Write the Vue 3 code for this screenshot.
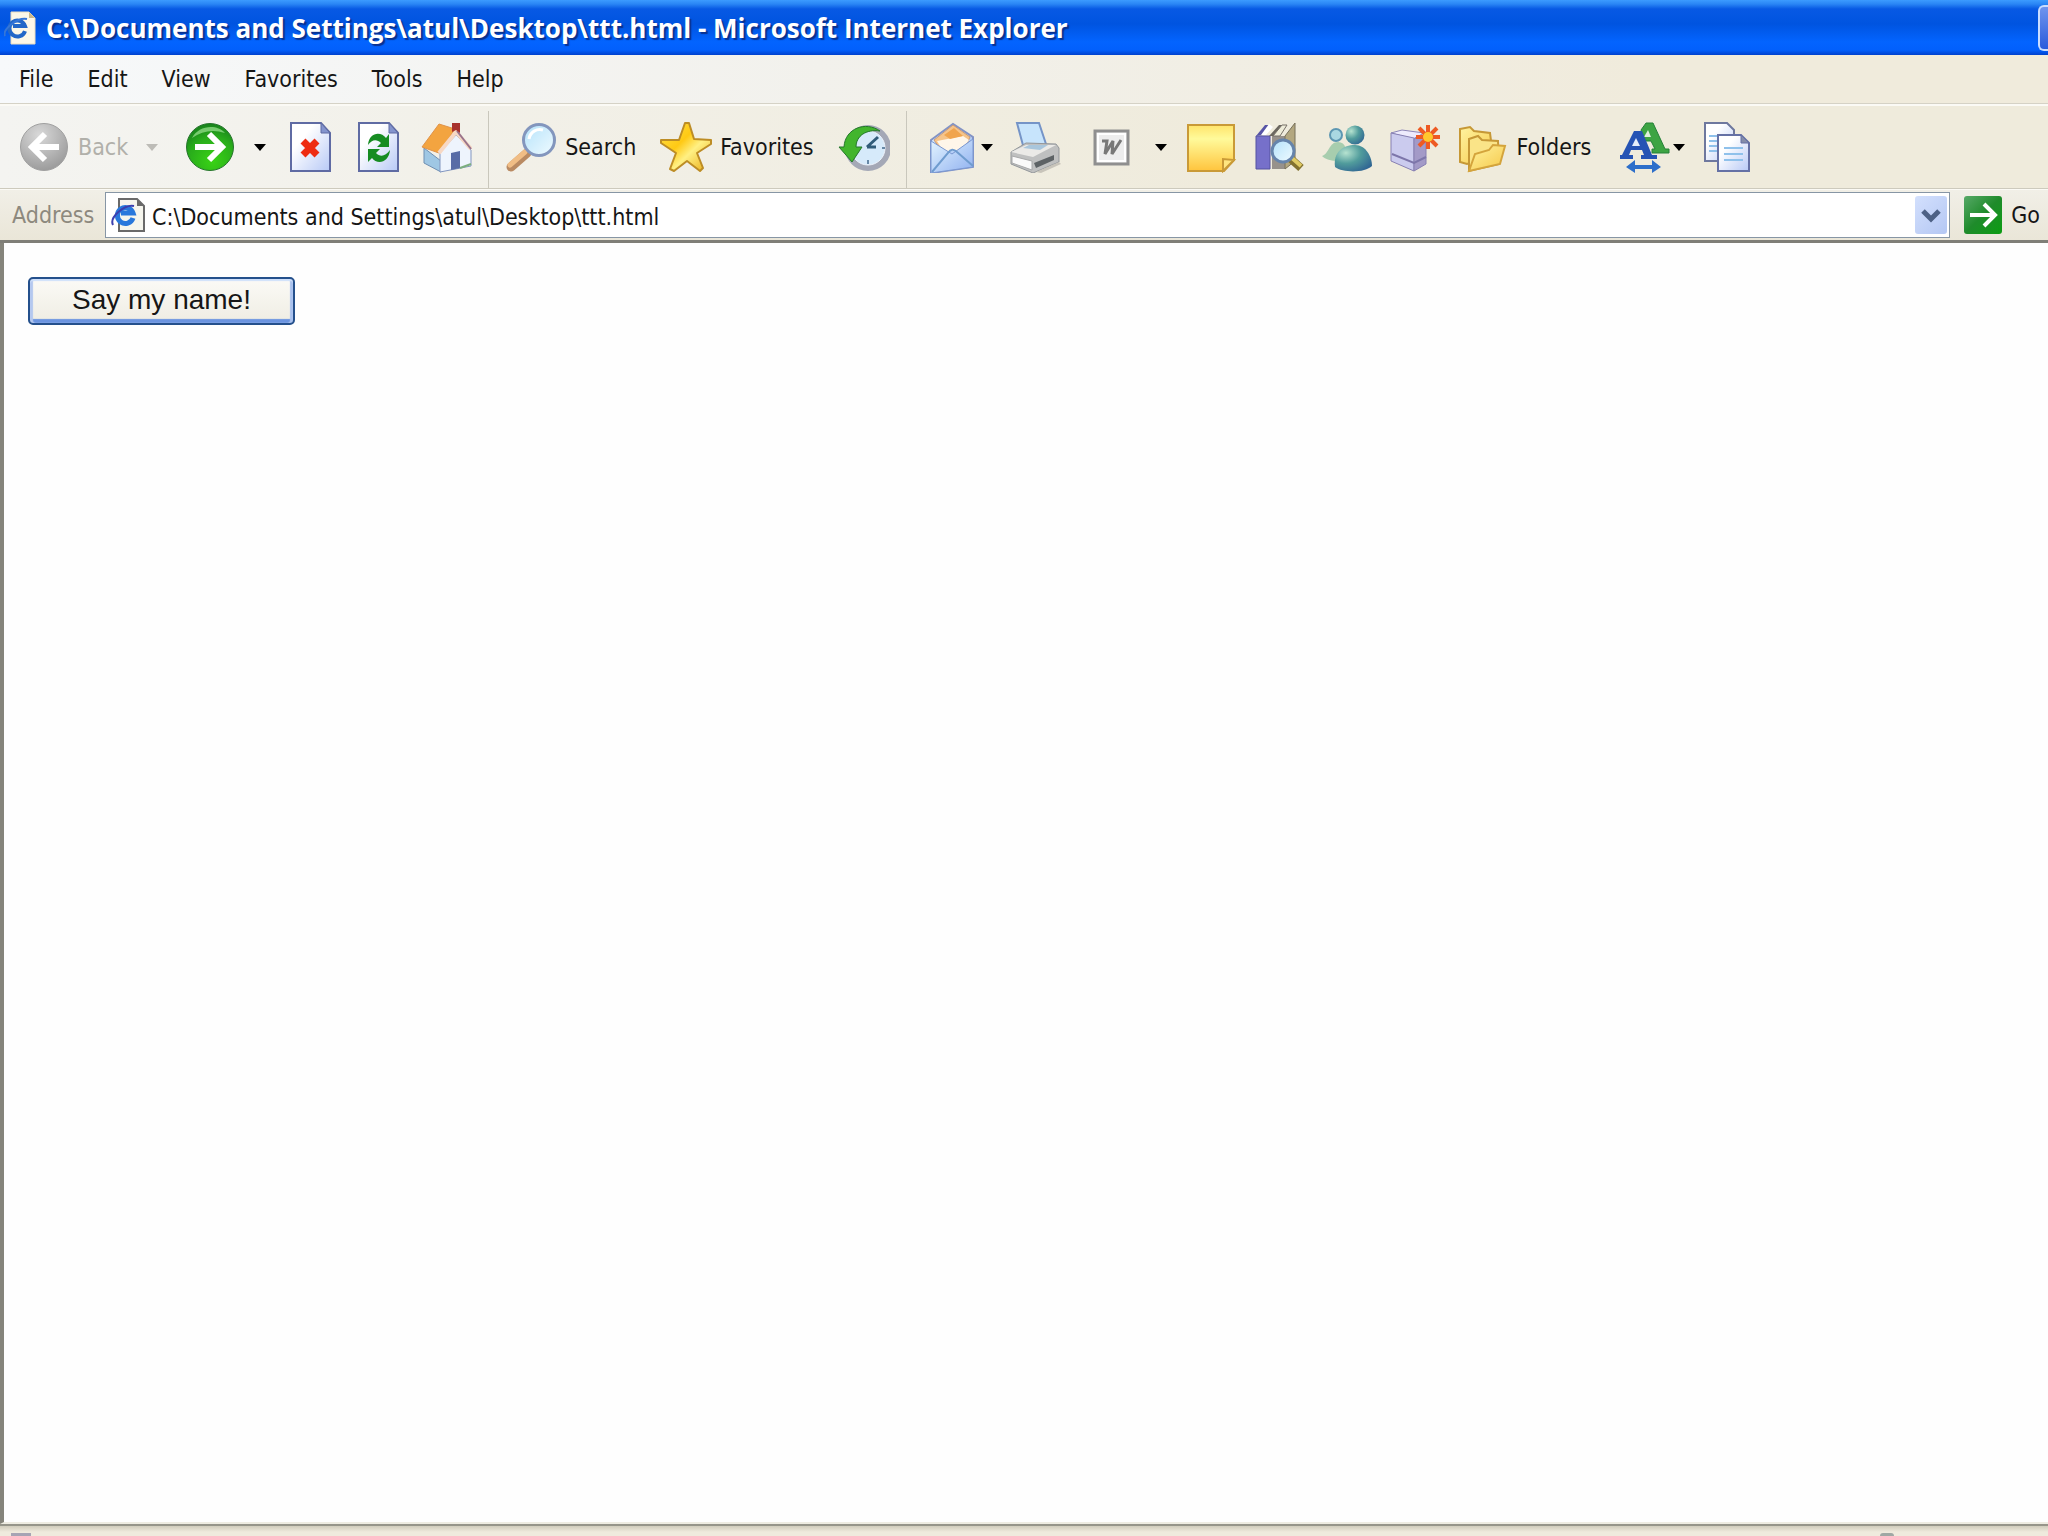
<template>
  <div class="browser">
    <header class="title-bar">
      <svg class="page-icon title-icon" viewBox="0 0 34 34">
        <path d="M7 1H25L31 7V33H7Z" fill="#fdf8e8" stroke="#e8ddc0" />
        <path d="M25 1V7H31Z" fill="#c9b98d" />
        <path d="M21 20A8 8 0 1 1 21 15H9" fill="none" stroke="#2468c8" stroke-width="4" />
        <path d="M1 25C-2 19 13 6 23 8" fill="none" stroke="#3576d8" stroke-width="2" />
      </svg>
      <h1 class="title-text">{{ filePath }} - Microsoft Internet Explorer</h1>
      <button class="caption-btn" aria-label="Minimize"></button>
    </header>

    <nav class="menu-bar">
      <button v-for="item in menuItems" :key="item" class="menu-item">{{ item }}</button>
    </nav>

    <div class="toolbar">
      <button class="tool labelled" disabled>
        <svg class="icon" viewBox="0 0 52 52">
          <defs>
            <radialGradient id="greyBall" cx=".4" cy=".25" r=".8">
              <stop offset="0" stop-color="#d9d9d9" />
              <stop offset=".6" stop-color="#b3b3b3" />
              <stop offset="1" stop-color="#989898" />
            </radialGradient>
          </defs>
          <circle cx="26" cy="26" r="23.500" fill="url(#greyBall)" stroke="#a0a0a0" />
          <path d="M41 26H14M27 13L14 26L27 39" fill="none" stroke="#fff" stroke-width="6" />
        </svg>
        <span>Back</span>
        <i class="arrow far"></i>
      </button>
      <button class="tool" aria-label="Forward">
        <svg class="icon" viewBox="0 0 52 52">
          <defs>
            <radialGradient id="greenBall" cx=".55" cy=".8" r=".85">
              <stop offset="0" stop-color="#39d315" />
              <stop offset=".6" stop-color="#29ac1b" />
              <stop offset="1" stop-color="#147a1b" />
            </radialGradient>
          </defs>
          <circle cx="26" cy="26" r="23.500" fill="url(#greenBall)" stroke="#27752d" />
          <path d="M8 17C14 5 32 2 41 12C29 8 18 10 8 17Z" fill="#9ce392" opacity=".7" />
          <path d="M11 26H37M25 13L38 26L25 39" fill="none" stroke="#fff" stroke-width="6" />
        </svg>
        <i class="arrow far"></i>
      </button>
      <button class="tool" aria-label="Stop">
        <svg class="icon" viewBox="0 0 52 52">
          <defs>
            <linearGradient id="sheet" x1="0" y1="0" x2="1" y2="1">
              <stop offset=".3" stop-color="#fff" />
              <stop offset="1" stop-color="#b7c9f6" />
            </linearGradient>
          </defs>
          <path d="M7 2H37L46 12V50H7Z" fill="url(#sheet)" stroke="#5f6ba3" stroke-width="2" />
          <path d="M37 2V12H46Z" fill="#8494cd" stroke="#5f6ba3" />
          <path d="M19 20L33 34M33 20L19 34" stroke="#ee2c12" stroke-width="7" />
        </svg>
      </button>
      <button class="tool" aria-label="Refresh">
        <svg class="icon" viewBox="0 0 52 52">
          <path d="M7 2H37L46 12V50H7Z" fill="url(#sheet)" stroke="#5f6ba3" stroke-width="2" />
          <path d="M37 2V12H46Z" fill="#8494cd" stroke="#5f6ba3" />
          <path d="M16 24C17 11 29 10 34 17L37 13V26H25L29 22C25 18 20 18 16 24Z" fill="#168c22" />
          <path d="M38 29C37 42 25 44 20 37L16 41V28H28L24 32C28 36 33 36 38 29Z" fill="#168c22" />
        </svg>
      </button>
      <button class="tool" aria-label="Home">
        <svg class="icon" viewBox="0 0 52 52">
          <path d="M4 27L21 40V51L4 42Z" fill="#9fc7e4" stroke="#6f8fb2" />
          <path d="M20 31L36 14L51 29V45L20 51Z" fill="#eef4fd" stroke="#8296c0" />
          <path d="M2 26L19 3L35 8L19 32Z" fill="#f3a440" stroke="#e0934a" />
          <path d="M19 32L36 11L51 28" fill="none" stroke="#f7d8c4" stroke-width="4" />
          <path d="M37 10L51 28" fill="none" stroke="#98738c" stroke-width="2" />
          <path d="M32 2H40V12L36 9L32 11Z" fill="#a8322c" />
          <path d="M31 32L40 30V47L31 49Z" fill="#586ca6" />
          <path d="M40 47L51 43" stroke="#7cae7f" stroke-width="2" />
        </svg>
      </button>

      <span class="divider"></span>

      <button class="tool labelled">
        <svg class="icon" viewBox="0 0 52 52">
          <defs>
            <linearGradient id="lens" x1="0" y1="0" x2="1" y2="1">
              <stop offset="0" stop-color="#b4e2fa" />
              <stop offset="1" stop-color="#f0fbff" />
            </linearGradient>
          </defs>
          <path d="M6 46L22 32" stroke="#b98a62" stroke-width="9" stroke-linecap="round" />
          <path d="M5 44L20 31" stroke="#f0bd85" stroke-width="5" stroke-linecap="round" />
          <circle cx="34" cy="19" r="15.500" fill="url(#lens)" stroke="#8396bd" stroke-width="3" />
          <path d="M24 18C25 11 32 7 38 9" fill="none" stroke="#fff" stroke-width="3" />
        </svg>
        <span>Search</span>
      </button>
      <button class="tool labelled">
        <svg class="icon" viewBox="0 0 52 52">
          <defs>
            <linearGradient id="gold" x1="0" y1="0" x2="1" y2="1">
              <stop offset="0" stop-color="#ffe34d" />
              <stop offset=".4" stop-color="#ffc914" />
              <stop offset=".6" stop-color="#fff083" />
              <stop offset="1" stop-color="#e9a911" />
            </linearGradient>
          </defs>
          <path d="M25 2H29L34 18L51 19V23L37 32L43 47L40 50L27 40L14 50L10 48L16 32L1 22V19L19 19Z" fill="url(#gold)" stroke="#bd8d25" stroke-width="2" stroke-linejoin="round" />
        </svg>
        <span>Favorites</span>
      </button>
      <button class="tool" aria-label="History">
        <svg class="icon" viewBox="0 0 52 52">
          <circle cx="30" cy="27" r="20" fill="#d6eafa" stroke="#a4a8b6" stroke-width="6" />
          <circle cx="30" cy="27" r="17" fill="none" stroke="#edf2fa" />
          <path d="M29 26L40 16M29 26H38" stroke="#315c79" stroke-width="3" />
          <path d="M30 39V43M44 27H47" stroke="#6788a6" stroke-width="2" />
          <path d="M42 10C28 0 7 7 6 26H1L14 41L24 26H18C18 15 28 8 42 10Z" fill="#42b52d" stroke="#25772c" />
        </svg>
      </button>

      <span class="divider"></span>

      <button class="tool tight" aria-label="Mail">
        <svg class="icon" viewBox="0 0 52 52">
          <defs>
            <linearGradient id="paper" x1="0" y1="0" x2="1" y2="1">
              <stop offset="0" stop-color="#e4f5ff" />
              <stop offset="1" stop-color="#8fb0f0" />
            </linearGradient>
          </defs>
          <path d="M5 19L27 3L47 16V46L5 52Z" fill="url(#paper)" stroke="#8293c5" stroke-width="2" />
          <path d="M8 19L27 4L44 16L38 29H15Z" fill="#f6c489" stroke="#c99a78" />
          <path d="M11 20L37 15L43 19L35 30H17Z" fill="#fff6e9" />
          <path d="M18 14L28 7L37 15L24 18Z" fill="#f0a44d" />
          <path d="M5 20L26 33L47 18V46L5 52Z" fill="url(#paper)" stroke="#7b98d1" />
          <path d="M6 51L22 32Q26 26 31 31L47 45" fill="none" stroke="#6f9ccf" stroke-width="2" />
        </svg>
        <i class="arrow"></i>
      </button>
      <button class="tool" aria-label="Print">
        <svg class="icon" viewBox="0 0 52 52">
          <path d="M8 2L30 2L38 26L15 28Z" fill="#c7e4fc" stroke="#7594c7" stroke-width="2" />
          <path d="M2 31L17 22L47 23L50 27V41L24 52L2 43Z" fill="#bfc0c0" stroke="#93979b" />
          <path d="M2 31L17 24L47 24L24 36Z" fill="#ebeae7" />
          <path d="M14 27L20 24H39L31 29Z" fill="#a9c6dc" />
          <path d="M3 35L23 40V49L3 42Z" fill="#fafafa" stroke="#a7a8a9" />
          <path d="M25 42L45 34V39L27 47Z" fill="#5d6265" />
          <path d="M27 51L50 41L52 43L32 52Z" fill="#c8c4ba" />
        </svg>
      </button>
      <button class="tool word" aria-label="Edit with Microsoft Word">
        <svg class="icon" viewBox="0 0 52 52">
          <path d="M10 10H43V43H10Z" fill="#ededed" stroke="#8f8f8f" stroke-width="3" />
          <path d="M13 13H40V40H13Z" fill="none" stroke="#fff" stroke-width="2" />
          <path d="M17 20H22L20 33L28 20L27 33L36 19" fill="none" stroke="#787878" stroke-width="3" />
        </svg>
        <i class="arrow far"></i>
      </button>
      <button class="tool" aria-label="Note">
        <svg class="icon" viewBox="0 0 52 52">
          <defs>
            <linearGradient id="note" x1="0" y1="0" x2="0" y2="1">
              <stop offset="0" stop-color="#ffe46a" />
              <stop offset=".3" stop-color="#fffa9b" />
              <stop offset="1" stop-color="#ffc43d" />
            </linearGradient>
          </defs>
          <path d="M3 4H49V39L39 50H3Z" fill="url(#note)" stroke="#c99a37" stroke-width="2" />
          <path d="M38 50V38L49 39Z" fill="#ffe680" stroke="#c99a37" stroke-width="2" />
        </svg>
      </button>
      <button class="tool" aria-label="Research">
        <svg class="icon" viewBox="0 0 52 52">
          <path d="M3 15H17V48H3Z" fill="#7670ca" stroke="#5553a0" />
          <path d="M3 15L12 4H17L10 14Z" fill="#5754a6" />
          <path d="M8 14L16 3L20 6L13 14Z" fill="#fff" />
          <path d="M19 15H32V48H19Z" fill="#97918b" />
          <path d="M16 15L26 4H31L21 15Z" fill="#6b675f" />
          <path d="M20 15L29 4H34L27 15Z" fill="#eeecd9" stroke="#777169" />
          <path d="M32 15L42 2V40L32 48Z" fill="#b3a780" stroke="#77705a" />
          <path d="M38 38L48 47" stroke="#82712f" stroke-width="8" />
          <path d="M39 37L48 45" stroke="#dfca64" stroke-width="4" />
          <circle cx="30" cy="30" r="11" fill="url(#lens)" stroke="#6684ab" stroke-width="3" />
        </svg>
      </button>
      <button class="tool wide" aria-label="Messenger">
        <svg class="icon" viewBox="0 0 52 52">
          <defs>
            <radialGradient id="buddy" cx=".3" cy=".3" r=".8">
              <stop offset="0" stop-color="#b6e3d0" />
              <stop offset=".5" stop-color="#519c9c" />
              <stop offset="1" stop-color="#316793" />
            </radialGradient>
          </defs>
          <path d="M1 35C8 33 8 21 17 21C25 21 27 30 22 38C16 42 5 39 1 35Z" fill="#a7cdae" />
          <circle cx="15" cy="14" r="6" fill="#a9d8e2" stroke="#5d97b2" stroke-width="2" />
          <path d="M14 46C12 31 22 24 34 24C45 24 51 36 51 45C44 52 22 52 14 46Z" fill="url(#buddy)" />
          <circle cx="34" cy="14" r="9.500" fill="url(#buddy)" />
        </svg>
      </button>
      <button class="tool" aria-label="New">
        <svg class="icon" viewBox="0 0 52 52">
          <path d="M2 12L13 9L35 12L24 18Z" fill="#eeebfc" stroke="#8d86b8" />
          <path d="M2 12L25 17V50L2 40Z" fill="#cbcbee" stroke="#8780b2" />
          <path d="M25 18L37 13V43L25 50Z" fill="#a39ac7" stroke="#8780b2" />
          <path d="M3 33L25 42L37 36" fill="none" stroke="#7d76aa" stroke-width="2" />
          <path d="M39 4V28M27 16H51M30 7L48 25M48 7L30 25" stroke="#ee5a23" stroke-width="4" />
          <circle cx="39" cy="16" r="5" fill="#ffc72e" />
        </svg>
      </button>
      <button class="tool labelled">
        <svg class="icon" viewBox="0 0 52 52">
          <defs>
            <linearGradient id="folder" x1="0" y1="0" x2="1" y2="1">
              <stop offset="0" stop-color="#fff3a0" />
              <stop offset="1" stop-color="#f6c848" />
            </linearGradient>
          </defs>
          <path d="M3 8L13 6L17 10L33 12L36 35L10 43L3 41Z" fill="url(#folder)" stroke="#c69836" stroke-width="2" />
          <path d="M12 18L21 15L25 19L41 20L42 43L12 50Z" fill="#fae488" stroke="#c69836" stroke-width="2" />
          <path d="M12 50L18 33L32 29L36 24L48 25L43 43Z" fill="url(#folder)" stroke="#d4a43c" stroke-width="2" />
        </svg>
        <span>Folders</span>
      </button>
      <button class="tool tight" aria-label="Text Size">
        <svg class="icon" viewBox="0 0 52 52">
          <path d="M23 9L28 2H35L47 28H51V32H34V28H37L33 20H27Z" fill="#3da443" stroke="#258139" />
          <path d="M30 9L26 16H33Z" fill="#dff0dc" />
          <path d="M4 34L16 10H24L34 34H39V38H23V34H26L24 29H13L11 34H15V38H2V34Z" fill="#2553b4" />
          <path d="M18 17L14 25H22Z" fill="#e4edfa" />
          <path d="M8 46L17 39V44H34V39L43 46L34 52V48H17V52Z" fill="#2d6fca" />
        </svg>
        <i class="arrow"></i>
      </button>
      <button class="tool" aria-label="Copy">
        <svg class="icon" viewBox="0 0 52 52">
          <path d="M4 2H26L33 9V40H4Z" fill="url(#sheet)" stroke="#6e789e" stroke-width="2" />
          <path d="M8 15H18M8 20H18M8 25H18M8 30H18" stroke="#8fc1eb" stroke-width="2" />
          <path d="M17 14H40L48 22V50H17Z" fill="url(#sheet)" stroke="#6571a5" stroke-width="2" />
          <path d="M40 14V22H48Z" fill="#858da9" stroke="#6571a5" />
          <path d="M23 27H42M23 33H42M23 39H42" stroke="#8fc1eb" stroke-width="2" />
        </svg>
      </button>
    </div>

    <form class="address-bar" @submit.prevent>
      <label class="address-label" for="address">Address</label>
      <div class="address-box">
        <svg class="page-icon" viewBox="0 0 34 34">
          <path d="M8 1H26L33 8V33H8Z" fill="#f5f5ed" stroke="#6a6a6a" stroke-width="2" />
          <path d="M26 1V8H33Z" fill="#6a6a6a" />
          <path d="M22 20A8 8 0 1 1 22 15H10" fill="none" stroke="#2878dc" stroke-width="5" />
          <path d="M2 27C-2 19 14 6 23 8" fill="none" stroke="#3c3fae" stroke-width="2" />
        </svg>
        <input id="address" v-model="address" class="address-input" type="text" spellcheck="false" />
        <button class="drop-btn" type="button" aria-label="Show addresses">
          <svg viewBox="0 0 32 38"><path d="M8 15L16 23L24 15" fill="none" stroke="#4d6185" stroke-width="5" /></svg>
        </button>
      </div>
      <button class="go-btn" type="submit">
        <svg class="go-icon" viewBox="0 0 38 38">
          <defs>
            <linearGradient id="goGreen" x1="0" y1="0" x2="1" y2="1">
              <stop offset="0" stop-color="#57a968" />
              <stop offset=".5" stop-color="#1f8b2b" />
              <stop offset="1" stop-color="#0b9d12" />
            </linearGradient>
          </defs>
          <rect width="38" height="38" rx="3" fill="url(#goGreen)" />
          <path d="M6 19H30M20 8L31 19L20 30" fill="none" stroke="#fff" stroke-width="4" />
        </svg>
        <span>Go</span>
      </button>
    </form>

    <main class="document">
      <button class="say-btn">Say my name!</button>
    </main>

    <footer class="status-bar">
      <span class="status-icon"></span>
      <span class="status-icon zone"></span>
    </footer>
  </div>
</template>

<script setup>
import { ref } from 'vue'

const filePath = 'C:\\Documents and Settings\\atul\\Desktop\\ttt.html'
const address = ref(filePath)
const menuItems = ['File', 'Edit', 'View', 'Favorites', 'Tools', 'Help']
</script>

<style>
body {
  margin: 0;
  overflow: hidden;
}
</style>

<style scoped>
.browser {
  display: flex;
  flex-direction: column;
  height: 100vh;
  overflow: hidden;
  background: #efebdc;
  font-family: "DejaVu Sans Condensed", "DejaVu Sans", sans-serif;
  font-size: 23px;
  line-height: 28px;
  color: #161616;
}

button,
input {
  font: inherit;
  color: inherit;
  border: none;
  background: none;
  padding: 0;
  margin: 0;
}

.title-bar {
  display: flex;
  align-items: center;
  flex-shrink: 0;
  height: 55px;
  padding-left: 4px;
  background: linear-gradient(#3c9bff 0, #2a86f5 4px, #0759e4 9px, #0054e0 24px, #0364ff 42px, #0260fc 50px, #0040cd 55px);
}

.page-icon {
  flex-shrink: 0;
  width: 34px;
  height: 34px;
}

.title-text {
  flex: 1;
  margin: 0 0 0 8px;
  font-family: "Open Sans", sans-serif;
  font-size: 26px;
  font-weight: 700;
  line-height: 36px;
  white-space: nowrap;
  color: #fff;
  text-shadow: 2px 2px 1px #0a318f;
}

.caption-btn {
  width: 10px;
  height: 46px;
  border: 2px solid #c9ddff;
  border-right: none;
  border-radius: 6px 0 0 6px;
  background: linear-gradient(#6f94ee, #2b5bdb);
}

.menu-bar {
  display: flex;
  flex-shrink: 0;
  align-items: center;
  height: 48px;
  padding-left: 2px;
  border-bottom: 1px solid #d5d2c6;
  background: linear-gradient(90deg, #f7f9fb, #f2f1ec 40%, #f0ebdc 80%);
}

.menu-item {
  padding: 0 17px;
}

.toolbar {
  display: flex;
  flex-shrink: 0;
  align-items: center;
  gap: 16px;
  height: 82px;
  padding-left: 18px;
  border-top: 2px solid #fbfaf5;
  border-bottom: 1px solid #cdcabd;
  background: linear-gradient(90deg, #f4f4f1, #efebdc 60%);
}

.tool {
  display: flex;
  align-items: center;
  gap: 8px;
  flex-shrink: 0;
}

.tool:disabled {
  color: #b1b0aa;
}

.labelled {
  padding-right: 8px;
}

.tight {
  gap: 3px;
  padding-left: 3px;
}

.word {
  padding-left: 8px;
}

.icon {
  width: 52px;
  height: 52px;
}

.arrow {
  border: 6px solid transparent;
  border-top: 7px solid #000;
  border-bottom: none;
}

.arrow.far {
  margin: 0 2px 0 10px;
}

.tool:disabled .arrow {
  border-top-color: #bdbcb7;
}

.divider {
  align-self: stretch;
  width: 1px;
  margin-top: 5px;
  background: #c9c7bc;
}

.address-bar {
  display: flex;
  flex-shrink: 0;
  align-items: center;
  height: 50px;
  padding: 0 8px 0 12px;
  border-top: 1px solid #fbfaf5;
  border-bottom: 3px solid #7f7e77;
  background: linear-gradient(#f1efe7, #eae6d8);
}

.address-label {
  width: 93px;
  color: #8d897e;
}

.address-box {
  display: flex;
  flex: 1;
  align-items: center;
  height: 44px;
  padding: 0 2px 0 5px;
  border: 1px solid #8796a5;
  background: #fff;
}

.address-input {
  flex: 1;
  min-width: 0;
  padding: 4px 0 0 7px;
  outline: none;
}

.drop-btn {
  display: flex;
  width: 32px;
  height: 38px;
  border-radius: 3px;
  background: linear-gradient(135deg, #d3e0fd, #b4c7f3);
}

.go-btn {
  display: flex;
  align-items: center;
  gap: 9px;
  margin-left: 14px;
}

.go-icon {
  width: 38px;
  height: 38px;
}

.document {
  flex: 1;
  padding: 34px 24px;
  border-left: 4px solid #85847b;
  border-bottom: 2px solid #eeece2;
  background: #fefefe;
}

.say-btn {
  height: 48px;
  padding: 0 42px 3px;
  border: 2px solid #24508c;
  border-radius: 5px;
  background: linear-gradient(#fbfaf6, #efede3);
  box-shadow: inset 0 2px 1px #cfe0fb, inset 3px 0 1px #b4c8ef, inset -3px 0 1px #a9c1ee, inset 0 -4px 1px #6b94e0;
  font-family: "Liberation Sans", Arial, sans-serif;
  font-size: 28px;
  line-height: 32px;
}

.status-bar {
  display: flex;
  flex-shrink: 0;
  justify-content: space-between;
  align-items: flex-end;
  height: 10px;
  padding: 0 154px 0 11px;
  border-top: 2px solid #96958a;
  background: linear-gradient(#d0ccbc, #efeadd 6px);
}

.status-icon {
  width: 20px;
  height: 3px;
  background: #a6a4b4;
}

.status-icon.zone {
  width: 14px;
  border-radius: 6px 6px 0 0;
  background: #9fa8a4;
}
</style>
